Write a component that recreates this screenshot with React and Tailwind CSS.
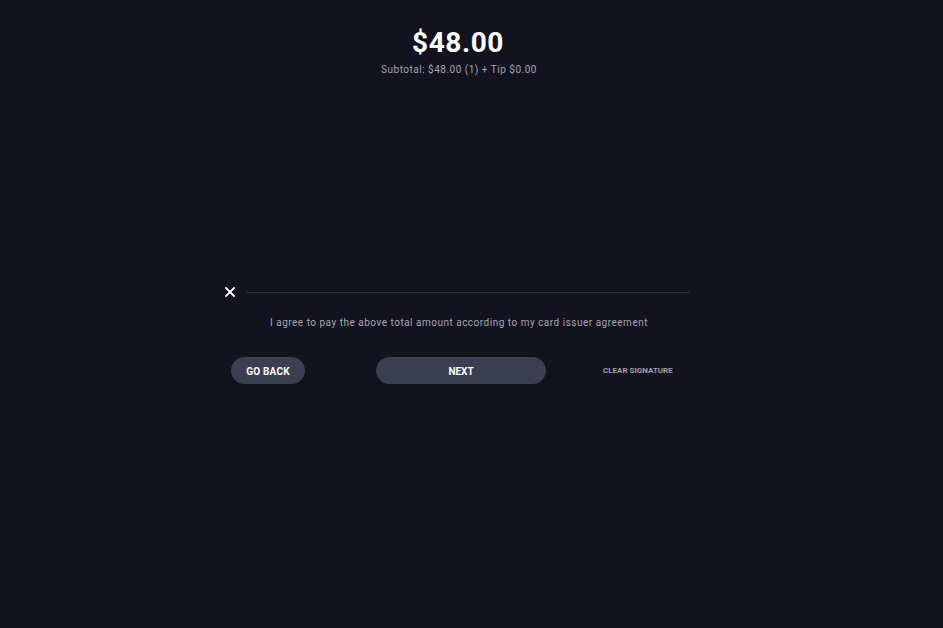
export default function App() {
  return (
    <div className="min-h-[628px] w-full bg-[#13131f] text-white" style={{ fontFamily: 'Roboto, "Liberation Sans", sans-serif' }}>
      <div className="flex flex-col items-center pr-[23px]">
        <div className="mt-[26px] ml-[-4px] text-[28px] font-bold leading-[34px] tracking-[0.6px]">$48.00</div>
        <div className="mt-[4px] ml-[-2px] text-[10px] leading-[12px] tracking-[0.5px] text-[#a3a3b0]">Subtotal: $48.00 (1) + Tip $0.00</div>
        <div className="mt-[209px] w-[460px]">
          <div className="flex items-center h-[14px]">
            <div className="w-[16px] flex">
              <svg width="10" height="10" viewBox="0 0 10 10" className="ml-[-5px]">
                <path d="M1 1 L9 9 M9 1 L1 9" stroke="white" strokeWidth="1.8" strokeLinecap="square" />
              </svg>
            </div>
            <div className="flex-1 h-px bg-[#2a2b3a]" />
          </div>
          <div className="mt-[17px] ml-[-2px] text-center text-[10px] leading-[14px] tracking-[0.5px] text-[#a6a6b2]">
            I agree to pay the above total amount according to my card issuer agreement
          </div>
          <div className="mt-[27px] flex items-center">
            <button className="ml-[1px] h-[27px] w-[74px] rounded-full bg-[#3c3e52] pt-px text-[10px] font-bold tracking-[0.2px] text-white">GO BACK</button>
            <button className="ml-[71px] h-[27px] w-[170px] rounded-full bg-[#3c3e52] pt-px text-[10px] font-bold text-white">NEXT</button>
            <span className="ml-[57px] pt-px text-[8px] font-bold text-[#a0a0ac]">CLEAR SIGNATURE</span>
          </div>
        </div>
      </div>
    </div>
  );
}
